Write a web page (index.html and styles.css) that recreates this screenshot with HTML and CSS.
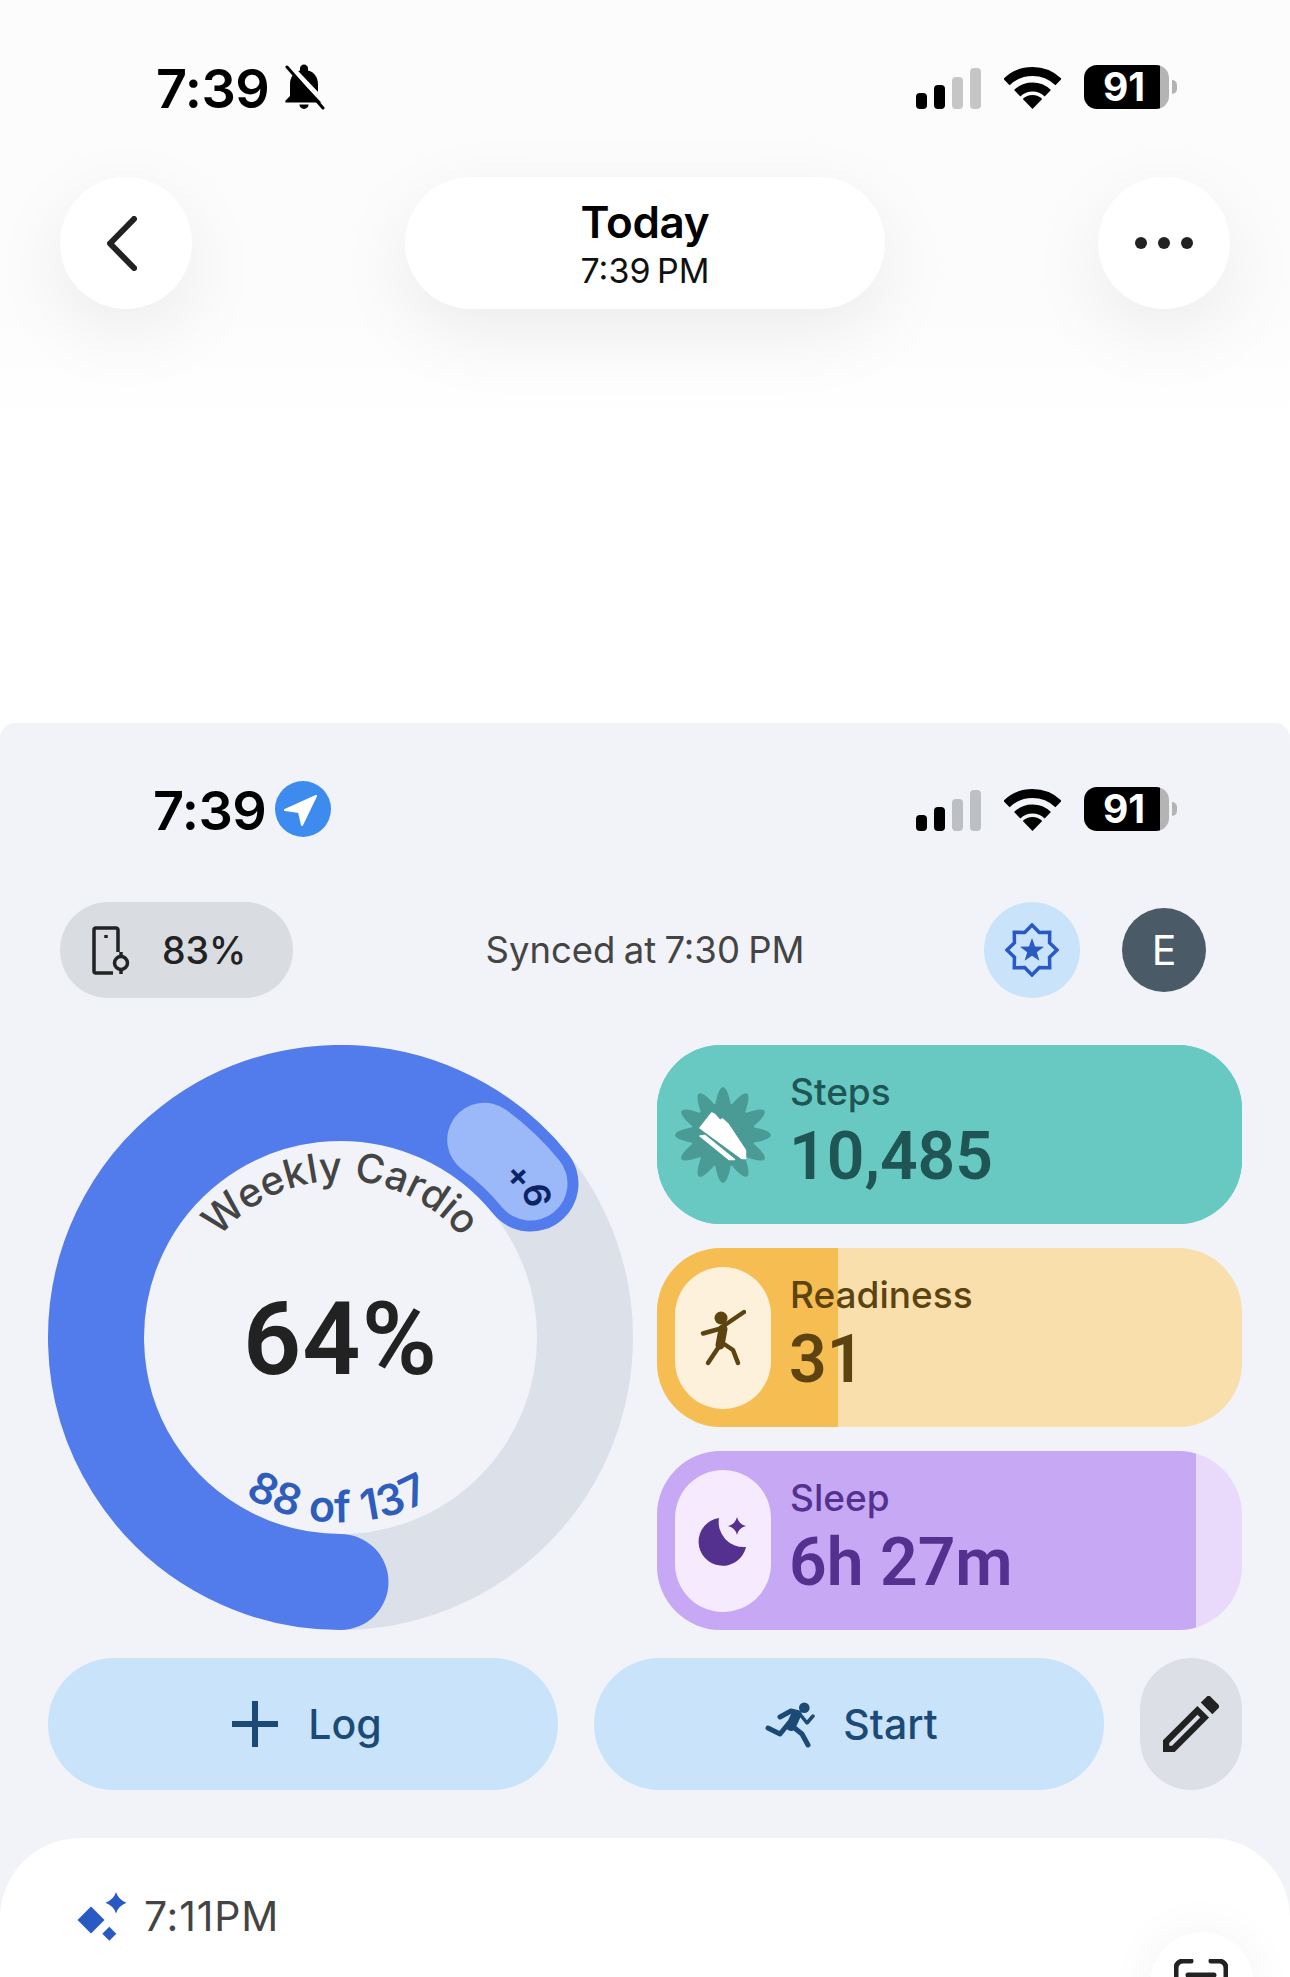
FILE: index.html
```html
<!DOCTYPE html>
<html lang="en">
<head>
  <meta charset="UTF-8" />
  <meta name="viewport" content="width=device-width, initial-scale=1.0" />
  <title>Today</title>
  <link rel="stylesheet" href="styles.css">
</head>
<body>
  <svg class="defs" aria-hidden="true">
    <symbol id="wifi" viewBox="0 0 57 42">
      <path d="M2.45 15.03A37.5 37.5 0 0 1 54.55 15.03" fill="none" stroke="currentColor" stroke-width="9"/>
      <path d="M13.2 26.2A22 22 0 0 1 43.8 26.2" fill="none" stroke="currentColor" stroke-width="9"/>
      <path d="M28.5 42L18.8 31.9A14 14 0 0 1 38.2 31.9Z" fill="currentColor"/>
    </symbol>
  </svg>

  <section class="top">
    <div class="status">
      <div class="status-left">
        <span class="clock">7:39</span>
        <svg class="bell" viewBox="2.500 1 19.500 23">
          <path d="M12 23.500c1.300 0 2.300-1 2.300-2.200h-4.600c0 1.200 1 2.200 2.300 2.200zm7-6.500v-5.800c0-3.400-1.800-6.200-5-6.900V3.200c0-1-.9-1.900-2-1.900s-2 .9-2 1.900v1.100c-3.200.7-5 3.500-5 6.900V17l-2.300 2.400v.9h18.600v-.9L19 17z"/>
          <path class="bell-gap" d="M4.500 1.500L24.500 22.500"/>
          <path class="bell-slash" d="M3.500 2.500L21.500 23"/>
        </svg>
      </div>
      <div class="status-right">
        <svg class="signal" viewBox="0 0 65 41">
          <rect x="0" y="25" width="11" height="16" rx="4"/>
          <rect x="18" y="17" width="11" height="24" rx="4"/>
          <rect class="signal-off" x="36" y="9" width="11" height="32" rx="4"/>
          <rect class="signal-off" x="54" y="0" width="11" height="41" rx="4"/>
        </svg>
        <svg class="wifi"><use href="#wifi"/></svg>
        <div class="battery"><span>91</span></div>
      </div>
    </div>

    <header class="title-row">
      <button class="round-btn">
        <svg class="back-icon" viewBox="0 0 30 55"><path d="M27 3L3 27.500L27 52"/></svg>
      </button>
      <div class="title-pill">
        <div class="title-main">Today</div>
        <div class="title-sub">7:39 PM</div>
      </div>
      <button class="round-btn">
        <svg class="more-icon" viewBox="0 0 58 12"><circle cx="6" cy="6" r="6"/><circle cx="29" cy="6" r="6"/><circle cx="52" cy="6" r="6"/></svg>
      </button>
    </header>
  </section>

  <main class="panel">
    <div class="status status-inner">
      <div class="status-left">
        <span class="clock">7:39</span>
        <svg class="location" viewBox="0 0 56 56">
          <circle cx="28" cy="28" r="28"/>
          <path d="M41 15L10 29L24 31L27 44Z"/>
        </svg>
      </div>
      <div class="status-right">
        <svg class="signal" viewBox="0 0 65 41">
          <rect x="0" y="25" width="11" height="16" rx="4"/>
          <rect x="18" y="17" width="11" height="24" rx="4"/>
          <rect class="signal-off" x="36" y="9" width="11" height="32" rx="4"/>
          <rect class="signal-off" x="54" y="0" width="11" height="41" rx="4"/>
        </svg>
        <svg class="wifi"><use href="#wifi"/></svg>
        <div class="battery"><span>91</span></div>
      </div>
    </div>

    <div class="sync-row">
      <div class="device-chip">
        <svg class="device-icon" viewBox="0 0 38 49">
          <path d="M26 26V4a2 2 0 0 0-2-2H4a2 2 0 0 0-2 2v41a2 2 0 0 0 2 2h17"/>
          <circle cx="29" cy="37" r="6.500"/>
          <path d="M29 26v4M29 44v4"/>
          <path d="M14 9v3"/>
        </svg>
        <span>83%</span>
      </div>
      <div class="sync-text">Synced at 7:30 PM</div>
      <div class="sync-actions">
        <div class="badge-btn">
          <svg class="badge-icon" viewBox="-2 -2 54 54">
            <path class="badge-outline" d="M25 0L32.300 7.450L42.700 7.300L42.550 17.700L50 25L42.550 32.300L42.700 42.700L32.300 42.550L25 50L17.700 42.550L7.300 42.700L7.450 32.300L0 25L7.450 17.700L7.300 7.300L17.700 7.450Z"/>
            <path class="badge-star" d="M25 13L28 21.500L37 21.700L29.800 27.200L32.400 35.800L25 30.700L17.600 35.800L20.200 27.200L13 21.700L22 21.500Z"/>
          </svg>
        </div>
        <div class="avatar">E</div>
      </div>
    </div>

    <div class="dash">
      <svg class="ring" viewBox="0 0 585 585">
        <defs>
          <path id="arc-top" d="M135.500 292.500A157 157 0 0 1 449.500 292.500"/>
          <path id="arc-bottom" d="M107.500 292.500A185 185 0 0 0 477.500 292.500"/>
        </defs>
        <circle class="ring-track" cx="292.500" cy="292.500" r="244.500"/>
        <path class="ring-value" d="M482.500 138.600A244.500 244.500 0 1 0 292.500 537"/>
        <path class="ring-extra" d="M436.200 94.700A244.500 244.500 0 0 1 482.500 138.600"/>
        <text class="ring-title"><textPath href="#arc-top" startOffset="50%">Weekly Cardio</textPath></text>
        <text class="ring-count"><textPath href="#arc-bottom" startOffset="49.500%">88 of 137</textPath></text>
        <text class="ring-pct" x="292.500" y="329">64%</text>
        <text class="ring-plus" transform="translate(472 130) rotate(47)">+</text>
        <text class="ring-plus" transform="translate(489 150) rotate(80)">6</text>
      </svg>

      <div class="metrics">
        <div class="metric metric-steps">
          <div class="metric-fill" style="width: 100%"></div>
          <div class="metric-icon flower">
            <svg viewBox="0 0 96 96">
              <g class="petals">
                <circle cx="48" cy="48" r="32"/>
                <ellipse cx="48" cy="48" rx="48" ry="10"/>
                <ellipse cx="48" cy="48" rx="48" ry="10" transform="rotate(30 48 48)"/>
                <ellipse cx="48" cy="48" rx="48" ry="10" transform="rotate(60 48 48)"/>
                <ellipse cx="48" cy="48" rx="48" ry="10" transform="rotate(90 48 48)"/>
                <ellipse cx="48" cy="48" rx="48" ry="10" transform="rotate(120 48 48)"/>
                <ellipse cx="48" cy="48" rx="48" ry="10" transform="rotate(150 48 48)"/>
              </g>
              <path class="shoe" d="M25 41L36.700 26L40 27.700L45 33.500L47.500 32L53 37L70.500 63.300L70.500 71.500L66.700 71.500Z"/>
              <path class="shoe" d="M25 49L30 48.500L59.500 72.500L54 72.500Z"/>
            </svg>
          </div>
          <div class="metric-text">
            <div class="metric-label">Steps</div>
            <div class="metric-value">10,485</div>
          </div>
        </div>

        <div class="metric metric-ready">
          <div class="metric-fill" style="width: 31%"></div>
          <div class="metric-icon pill">
            <svg class="figure" viewBox="0 0 46 60">
              <circle cx="21" cy="10" r="6.500"/>
              <path d="M3 25.500L19 21L44 4"/>
              <path class="figure-body" d="M23 21L20 37"/>
              <path d="M20 37L8 55"/>
              <path d="M21 34L33 42L38 55"/>
            </svg>
          </div>
          <div class="metric-text">
            <div class="metric-label">Readiness</div>
            <div class="metric-value">31</div>
          </div>
        </div>

        <div class="metric metric-sleep">
          <div class="metric-fill" style="width: 92.200%"></div>
          <div class="metric-icon pill">
            <svg class="moon" viewBox="0 0 50 50">
              <path d="M21 2A24 24 0 1 0 48 31A25 25 0 0 1 21 2Z"/>
              <path d="M39 1Q40.500 8 48 10Q40.500 12 39 19Q37.500 12 30 10Q37.500 8 39 1Z"/>
            </svg>
          </div>
          <div class="metric-text">
            <div class="metric-label">Sleep</div>
            <div class="metric-value">6h 27m</div>
          </div>
        </div>
      </div>
    </div>

    <div class="actions">
      <button class="action-btn">
        <svg class="plus-icon" viewBox="0 0 46 46"><path d="M23 0V46M0 23H46"/></svg>
        <span>Log</span>
      </button>
      <button class="action-btn">
        <svg class="run-icon" viewBox="14 10 50 47">
          <circle cx="53.300" cy="16.700" r="5.300"/>
          <path d="M29 26L40 20L48 22"/>
          <path class="run-thin" d="M48 22L56 32L62 25"/>
          <path class="run-torso" d="M45 24L40 35"/>
          <path d="M17 37L29 43L38 32"/>
          <path d="M41 35L51 43L57 54"/>
        </svg>
        <span>Start</span>
      </button>
      <button class="edit-btn">
        <svg class="edit-icon" viewBox="3 3 18 18">
          <path d="M3 17.250V21h3.750L17.810 9.940l-3.750-3.750L3 17.250zM5.920 19H5v-.92l9.060-9.060.92.92L5.920 19zM20.710 7.040a.996.996 0 0 0 0-1.410l-2.340-2.340a.996.996 0 0 0-1.410 0l-1.830 1.830 3.750 3.750 1.830-1.830z"/>
        </svg>
      </button>
    </div>

    <section class="sheet">
      <div class="sheet-head">
        <svg class="sparkle" viewBox="0 0 52 50">
          <path d="M15 15.500L28.500 29L15 42.500L1.500 29Z"/>
          <path d="M40 1Q42 8.500 50.500 11.700Q42 15 40 22.500Q38 15 29.500 11.700Q38 8.500 40 1Z"/>
          <path d="M33.300 35.700L40.300 42.700L33.300 49.700L26.300 42.700Z"/>
        </svg>
        <span>7:11PM</span>
      </div>
      <button class="scan-btn">
        <svg class="scan-icon" viewBox="0 0 54 60">
          <path d="M2 20V9a7 7 0 0 1 7-7h8M37 2h8a7 7 0 0 1 7 7v11M14 16h26"/>
        </svg>
      </button>
    </section>
  </main>
</body>
</html>
```

FILE: styles.css
```css
:root {
  --panel-bg: #f1f3f8;
  --ink: #222222;
  --ui-font: "Inter", "Liberation Sans", sans-serif;
  --num-font: "Roboto", "Inter", sans-serif;
  --btn-blue: #c8e3fa;
  --btn-ink: #1c4a77;
}

* {
  margin: 0;
  padding: 0;
  box-sizing: border-box;
}

html, body {
  width: 1290px;
  height: 1977px;
  overflow: hidden;
  background: #ffffff;
  font-family: var(--ui-font);
  color: var(--ink);
}

button {
  border: none;
  font: inherit;
  color: inherit;
}

.defs {
  display: none;
}

/* Top bar */
.top {
  height: 723px;
  padding-top: 64px;
  background: linear-gradient(#fcfcfc, #fcfcfc 300px, #ffffff 430px);
}

.status {
  height: 46px;
  padding: 0 113px 0 156px;
  display: flex;
  justify-content: space-between;
  align-items: center;
}

.status-left {
  display: flex;
  align-items: center;
  gap: 15px;
}

.clock {
  padding-top: 4px;
  font-size: 54px;
  font-weight: 600;
  line-height: 46px;
  color: #000000;
  letter-spacing: -0.5px;
}

.bell {
  width: 41px;
  height: 46px;
}

.bell-gap {
  stroke: #fcfcfc;
  stroke-width: 2.500;
  fill: none;
}

.bell-slash {
  stroke: #000000;
  stroke-width: 1.500;
  fill: none;
  stroke-linecap: round;
}

.status-right {
  display: flex;
  align-items: flex-end;
  gap: 23px;
}

.signal {
  width: 65px;
  height: 41px;
}

.signal-off {
  fill: #c6c6c6;
}

.wifi {
  width: 57px;
  height: 42px;
  color: #000000;
}

.battery {
  position: relative;
  width: 85px;
  height: 44px;
  border-radius: 13px;
  background: linear-gradient(to right, #000000 90%, #b4b4b4 90%);
  display: flex;
  align-items: center;
  padding-left: 19px;
  margin-right: 8px;
  color: #ffffff;
  font-size: 39px;
  font-weight: 700;
  line-height: 44px;
}

.battery::after {
  content: "";
  position: absolute;
  left: 88px;
  top: 15px;
  width: 5px;
  height: 14px;
  border-radius: 0 7px 7px 0;
  background: #b4b4b4;
}

.title-row {
  margin-top: 67px;
  padding: 0 60px;
  display: flex;
  justify-content: space-between;
  align-items: center;
}

.round-btn {
  width: 132px;
  height: 132px;
  border-radius: 50%;
  background: #ffffff;
  box-shadow: 0 24px 80px rgba(0, 0, 0, 0.07);
  display: flex;
  align-items: center;
  justify-content: center;
}

.back-icon {
  width: 30px;
  height: 55px;
  margin-right: 8px;
  fill: none;
  stroke: var(--ink);
  stroke-width: 6;
  stroke-linecap: round;
  stroke-linejoin: round;
}

.more-icon {
  width: 58px;
  height: 12px;
  fill: var(--ink);
}

.title-pill {
  width: 480px;
  height: 132px;
  padding-top: 3px;
  border-radius: 66px;
  background: #ffffff;
  box-shadow: 0 24px 80px rgba(0, 0, 0, 0.07);
  display: flex;
  flex-direction: column;
  align-items: center;
  justify-content: center;
}

.title-main {
  font-size: 44px;
  font-weight: 600;
  line-height: 50px;
  color: #000000;
  letter-spacing: -0.3px;
}

.title-sub {
  margin-top: 3px;
  font-size: 34px;
  line-height: 42px;
  color: #111111;
  word-spacing: -3px;
}

/* Panel */
.panel {
  height: 1254px;
  padding-top: 63px;
  background: var(--panel-bg);
  border-radius: 15px 15px 0 0;
}

.status-inner {
  padding-left: 153px;
}

.status-inner .status-left {
  gap: 9px;
}

.status-inner .signal-off {
  fill: #bcc0c5;
}

.location {
  width: 56px;
  height: 56px;
}

.location circle {
  fill: #3e8bf0;
}

.location path {
  fill: #ffffff;
  stroke: #ffffff;
  stroke-width: 2;
  stroke-linejoin: round;
}

.sync-row {
  margin-top: 70px;
  height: 96px;
  padding: 0 60px;
  display: grid;
  grid-template-columns: 1fr auto 1fr;
  align-items: center;
}

.device-chip {
  width: 233px;
  height: 96px;
  border-radius: 48px;
  background: #d9dce1;
  padding-left: 32px;
  display: flex;
  align-items: center;
  gap: 32px;
  font-size: 37.500px;
  font-weight: 500;
  color: #222222;
}

.device-icon {
  width: 38px;
  height: 49px;
  fill: none;
  stroke: #222222;
  stroke-width: 3.500;
}

.sync-text {
  font-size: 36.500px;
  color: #444444;
  word-spacing: -2px;
}

.sync-actions {
  display: flex;
  justify-content: flex-end;
  align-items: center;
  gap: 42px;
  padding-right: 24px;
}

.badge-btn {
  width: 96px;
  height: 96px;
  border-radius: 50%;
  background: var(--btn-blue);
  display: flex;
  align-items: center;
  justify-content: center;
}

.badge-icon {
  width: 54px;
  height: 54px;
}

.badge-outline {
  fill: none;
  stroke: #2a59c4;
  stroke-width: 3.500;
}

.badge-star {
  fill: #2a59c4;
}

.avatar {
  width: 84px;
  height: 84px;
  border-radius: 50%;
  background: #4a5a66;
  color: #ffffff;
  font-size: 41px;
  line-height: 84px;
  text-align: center;
}

/* Ring and metric cards */
.dash {
  margin-top: 47px;
  padding: 0 48px;
  display: grid;
  grid-template-columns: 585px 585px;
  gap: 24px;
}

.ring {
  width: 585px;
  height: 585px;
  display: block;
}

.ring-track {
  fill: none;
  stroke: #dce1e9;
  stroke-width: 96;
}

.ring-value {
  fill: none;
  stroke: #527cec;
  stroke-width: 96;
  stroke-linecap: round;
}

.ring-extra {
  fill: none;
  stroke: #9bb8f8;
  stroke-width: 74;
  stroke-linecap: round;
}

.ring-title {
  font-size: 40px;
  font-weight: 550;
  fill: #444444;
  text-anchor: middle;
}

.ring-count {
  font-size: 43px;
  font-weight: 600;
  letter-spacing: 0.6px;
  fill: #2f5dbb;
  text-anchor: middle;
}

.ring-pct {
  font-family: var(--num-font);
  font-size: 102px;
  font-weight: 600;
  letter-spacing: 1px;
  fill: var(--ink);
  text-anchor: middle;
}

.ring-plus {
  font-size: 36px;
  font-weight: 600;
  fill: #0d2464;
  text-anchor: middle;
  dominant-baseline: central;
}

.metrics {
  display: flex;
  flex-direction: column;
  gap: 24px;
}

.metric {
  position: relative;
  height: 179px;
  border-radius: 64px;
  overflow: hidden;
  padding-left: 18px;
  display: flex;
  align-items: center;
  gap: 19px;
}

.metric-fill {
  position: absolute;
  left: 0;
  top: 0;
  bottom: 0;
}

.metric-icon {
  position: relative;
  width: 96px;
  height: 142px;
  flex: none;
  display: flex;
  align-items: center;
  justify-content: center;
}

.metric-icon.pill {
  border-radius: 48px;
}

.flower svg {
  width: 96px;
  height: 96px;
}

.petals {
  fill: #4a9a96;
}

.shoe {
  fill: #ffffff;
  stroke: #ffffff;
  stroke-width: 1.500;
  stroke-linejoin: round;
}

.metric-text {
  position: relative;
}

.metric-label {
  font-size: 37px;
  font-weight: 500;
  line-height: 44px;
}

.metric-value {
  margin-left: -1px;
  font-family: var(--num-font);
  font-size: 66px;
  font-weight: 600;
  line-height: 85px;
}

.metric-steps {
  background: #68c9c3;
  color: #1f5655;
}

.metric-steps .metric-fill {
  background: #68c9c3;
}

.metric-ready {
  background: #f9dfac;
  color: #5c4310;
}

.metric-ready .metric-fill {
  background: #f5bd52;
}

.metric-ready .pill {
  background: #fdf1dc;
}

.figure {
  width: 46px;
  height: 60px;
  fill: none;
  stroke: #5c4310;
  stroke-width: 4.500;
  stroke-linecap: round;
  stroke-linejoin: round;
}

.figure circle {
  fill: #5c4310;
  stroke: none;
}

.figure-body {
  stroke-width: 9;
}

.metric-sleep {
  background: #e9d9fb;
  color: #54308f;
}

.metric-sleep .metric-fill {
  background: #c6a8f5;
}

.metric-sleep .pill {
  background: #f6ebfe;
}

.moon {
  width: 50px;
  height: 50px;
  fill: #54308f;
}

/* Action buttons */
.actions {
  margin-top: 28px;
  padding: 0 48px;
  display: flex;
  gap: 36px;
}

.action-btn {
  width: 510px;
  height: 132px;
  border-radius: 66px;
  background: var(--btn-blue);
  color: var(--btn-ink);
  display: flex;
  align-items: center;
  justify-content: center;
  gap: 30px;
  padding-left: 8px;
  font-size: 41px;
  font-weight: 500;
}

.plus-icon {
  width: 46px;
  height: 46px;
  fill: none;
  stroke: var(--btn-ink);
  stroke-width: 6;
}

.run-icon {
  width: 50px;
  height: 47px;
  margin-left: -3.500px;
  margin-right: -1.500px;
  fill: var(--btn-ink);
}

.run-icon path {
  fill: none;
  stroke: var(--btn-ink);
  stroke-width: 5;
  stroke-linecap: round;
  stroke-linejoin: round;
}

.run-icon .run-thin {
  stroke-width: 3.500;
}

.run-icon .run-torso {
  stroke-width: 10;
}

.edit-btn {
  width: 102px;
  height: 132px;
  border-radius: 51px;
  background: #dce0e6;
  display: flex;
  align-items: center;
  justify-content: center;
}

.edit-icon {
  width: 56px;
  height: 56px;
  fill: var(--ink);
}

/* Bottom sheet */
.sheet {
  position: relative;
  margin-top: 48px;
  height: 200px;
  padding: 53px 0 0 76px;
  border-radius: 80px 80px 0 0;
  background: #ffffff;
}

.sheet-head {
  display: flex;
  align-items: center;
  gap: 16px;
  font-size: 41px;
  color: #444444;
  letter-spacing: 0.8px;
}

.sparkle {
  width: 52px;
  height: 50px;
  fill: #2a59c4;
}

.scan-btn {
  position: absolute;
  left: 1150px;
  top: 94px;
  width: 104px;
  height: 104px;
  border-radius: 50%;
  background: #ffffff;
  box-shadow: 0 0 50px rgba(0, 0, 0, 0.05);
}

.scan-icon {
  position: absolute;
  left: 24px;
  top: 27px;
  width: 54px;
  height: 60px;
  fill: none;
  stroke: #222222;
  stroke-width: 5;
  stroke-linecap: round;
}
```
